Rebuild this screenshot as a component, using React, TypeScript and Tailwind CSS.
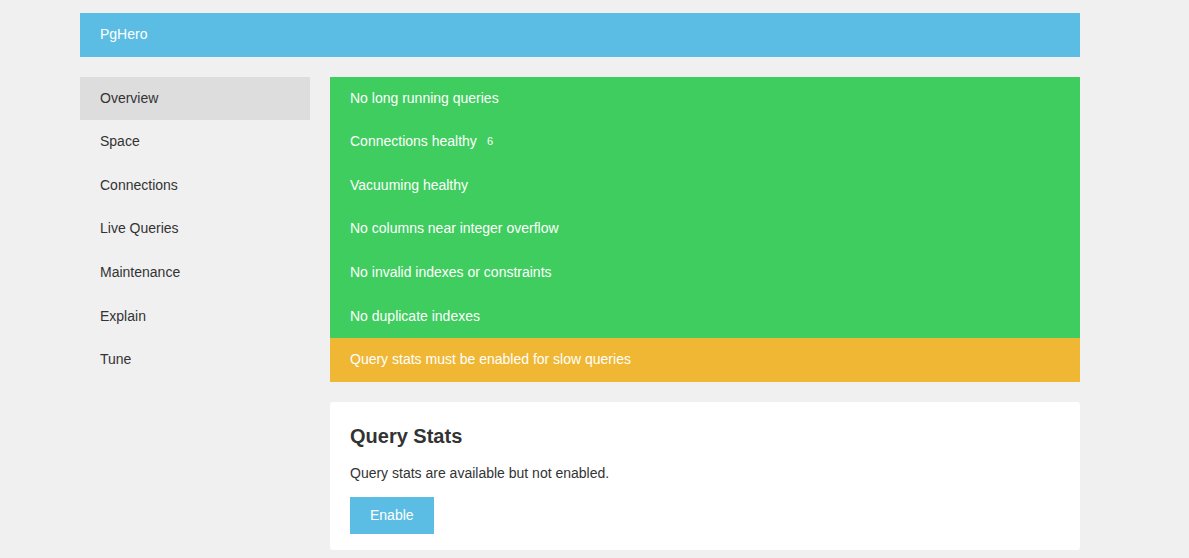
export default function App() {
  const nav = ["Overview", "Space", "Connections", "Live Queries", "Maintenance", "Explain", "Tune"];
  const green = [
    "No long running queries",
    "Connections healthy",
    "Vacuuming healthy",
    "No columns near integer overflow",
    "No invalid indexes or constraints",
    "No duplicate indexes",
  ];
  return (
    <div className="min-h-[558px] bg-[#f0f0f0] text-[14px] leading-[1.4] text-[#333333]" style={{ fontFamily: '"Liberation Sans", Arial, sans-serif' }}>
      <div className="ml-[80px] w-[1000px] pt-[13px]">
        <div className="bg-[#5bbde3] px-5 py-3 text-white">PgHero</div>
        <div className="mt-5 flex gap-5">
          <div className="w-[230px] shrink-0">
            {nav.map((n, i) => (
              <div key={n} className={`px-5 py-3 ${i === 0 ? "bg-[#dddddd]" : ""}`}>
                {n}
              </div>
            ))}
          </div>
          <div className="w-[750px]">
            <div className="text-white">
              {green.map((g, i) => (
                <div key={g} className="flex items-center bg-[#3ecd5e] px-5 py-3">
                  <span>{g}</span>
                  {i === 1 && <span className="ml-[10px] text-[11px]">6</span>}
                </div>
              ))}
              <div className="bg-[#efb734] px-5 py-3">Query stats must be enabled for slow queries</div>
            </div>
            <div className="mt-5 rounded-[3px] bg-white px-5 pt-5 pb-4">
              <h1 className="text-[20px] font-bold leading-[28px]">Query Stats</h1>
              <p className="mt-[14px]">Query stats are available but not enabled.</p>
              <button className="mt-[14px] h-[37px] bg-[#5bbde3] px-5 text-white">Enable</button>
            </div>
          </div>
        </div>
      </div>
    </div>
  );
}
